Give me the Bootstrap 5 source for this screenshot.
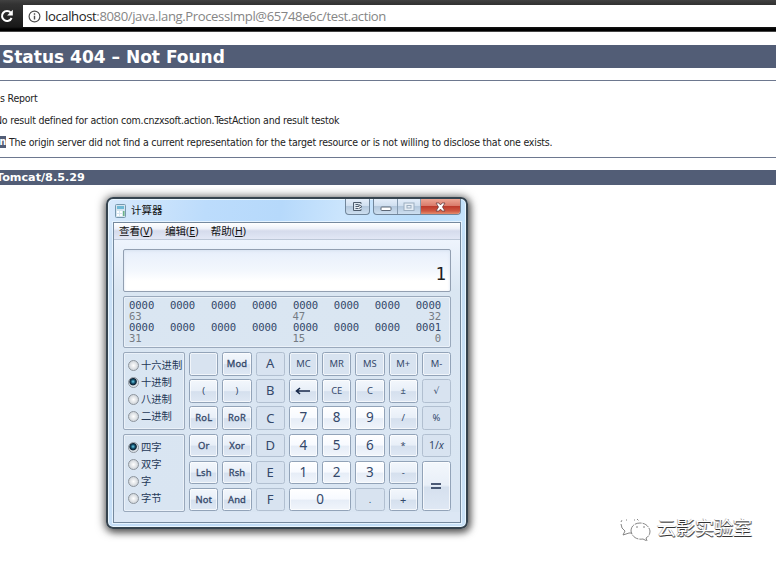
<!DOCTYPE html>
<html lang="zh-CN">
<head>
<meta charset="utf-8">
<title>Status 404 – Not Found</title>
<meta name="viewport" content="width=device-width, initial-scale=1">
<link href="https://cdn.jsdelivr.net/npm/bootstrap@5.3.0/dist/css/bootstrap.min.css" rel="stylesheet">
<style>
body{width:776px;height:561px;overflow:hidden;background:#fff;font-family:"DejaVu Sans Condensed","DejaVu Sans",sans-serif;color:#222}
.browser-bar{height:32px;background:linear-gradient(#414141 0,#333 4px,#262626 16px,#181818 27px,#000 29px,#000 31px,#888 32px)}
.reload{width:23px;height:32px}
.address{height:22px;margin-top:5px;background:#fff;font:13.1px "Open Sans","Noto Sans",sans-serif;color:#858585;white-space:nowrap}
.address b{font-weight:400;color:#222}
.address svg{margin:0 4px 0 5px}
.url{letter-spacing:-.39px}
.report{font-size:10.5px;line-height:14px;white-space:nowrap}
.report h1{height:23px;margin:13px 0 12px;padding-left:2px;background:#525d76;color:#fff;font:700 17px/24px "DejaVu Sans",sans-serif}
.rule{height:1px;background:#6d788f}
.report p{height:22px;margin:0;letter-spacing:-.21px}
.report p.kind{height:32px;padding-top:10px}
.report p.message{margin-left:-5px}
.cut-tag{float:left;width:6px;height:12px;line-height:11px;margin-right:3px;margin-top:1px;overflow:hidden;background:#525d76;color:#fff;font-weight:700;direction:rtl}
.report h3{height:15px;margin:12px 0 0 -5px;padding-left:1px;background:#525d76;color:#fff;font:700 11.2px/15px "DejaVu Sans",sans-serif}
.calc{left:106px;top:197px;width:362px;height:332px;border:2px solid #35434e;border-radius:7px;padding:0 5px 5px;background:linear-gradient(rgba(255,255,255,0) 24px,rgba(196,220,243,.6) 40px),linear-gradient(100deg,#d8e9fb 0,#bcdcfc 24%,#b6d9fb 42%,#cbe5fd 57%,#b9ddfb 75%,#d1e9fd 100%);box-shadow:inset 0 0 0 1px #e8f6ff,0 1px 8px 2px rgba(0,0,0,.5),2px 3px 7px rgba(0,0,0,.4);font-family:"Noto Sans","Noto Sans CJK SC",sans-serif;color:#253857}
.title{height:23px;font-size:10.5px;color:#111}
.title .icon{margin:0 5px 0 2px}
.caps{height:16px;border:1px solid #71869b;border-top:0;border-radius:0 0 4px 4px;overflow:hidden;background:linear-gradient(#e4eefa,#d0dfef 45%,#b4c8dd 50%,#cddff0)}
.caps span{width:23px}
.caps.lone{margin-right:3px}
.caps span+span{border-left:1px solid #8499ae}
.caps .shut{width:40px;background:linear-gradient(#eea694 0,#d97b6b 45%,#bd3b2c 50%,#cf5842 80%,#e58e6e)}
.client{height:301px;border:1px solid #75899e;background:#dce7f4;box-shadow:0 0 0 1px #e5f3ff}
.menu{height:17px;gap:12.5px;padding-left:5px;border-bottom:1px solid #bcc7d7;background:linear-gradient(#fff 0,#eef1f9 35%,#d5dbec 50%,#e2e7f5);font-size:10.5px;line-height:17px;color:#111}
.face{padding:9px 9px 0;background:linear-gradient(#eef4fd 0,#dae6f2 50px,#d9e5f2)}
.screen{height:43px;border:1px solid #929fb1;border-radius:2px;background:linear-gradient(#e7effb,#f3f7fd 50%,#fff 75%);box-shadow:inset 0 1px 3px #d7e2f0;color:#1f1f1f;font:17.5px/49px "DejaVu Sans Mono",monospace;padding-right:4px}
.bits{height:52px;margin:4px 0 4px;border:1px solid #9aa9bc;border-radius:2px;box-shadow:inset 0 0 0 1px #eaf1f9;padding:3px 9px 0 5px;font:10.6px/11px "DejaVu Sans Mono",monospace;letter-spacing:-.08px;color:#34486a}
.bits .marks{color:#757b82}
.marks .low{width:163.500px}
.radios{width:62px;border:1px solid #9aa9bc;border-radius:2px;box-shadow:inset 0 0 0 1px #eaf1f9;padding:4px 0 0 4px;font-size:10.3px}
.radios label{height:17px;white-space:nowrap}
.dot{flex:none;width:11px;height:11px;margin-right:2px;border:1px solid #8e959d;border-radius:50%;background:radial-gradient(#fff,#cfd4d9 75%)}
.dot.on{background:radial-gradient(circle at 45% 40%,#6fd0ec 0,#0d4560 30%,#123 45%,#dce3e9 58%)}
.keys{display:grid;grid-template-columns:repeat(8,29.2px);grid-template-rows:repeat(6,23.5px);column-gap:4.05px;row-gap:3.7px}
.key{display:flex;align-items:center;justify-content:center;border:1px solid #92a3b8;border-radius:2.5px;background:linear-gradient(#f3f7fc 0,#e8eff8 48%,#d5e0ee 53%,#dfe8f4);box-shadow:inset 0 0 0 1px rgba(255,255,255,.65);font-size:9.4px;line-height:1;color:#34486a}
.word{letter-spacing:.15px;-webkit-text-stroke:.3px #34486a}
.num{font-size:13.5px;background:linear-gradient(#fff 0,#f7faff 48%,#e6edf7 53%,#f1f5fb)}
.flat{background:#d8e3f0;border-color:#b1bfd0;box-shadow:none}
.mem{background:#d8e3f0}
.hex{font-size:13px}
.root{font:9px "DejaVu Sans",sans-serif}
.inverse{font-size:10.5px}
.plus{font-size:11px}
.wide{grid-column:4/6}
.tall{grid-column:8;grid-row:5/7}
.sign{left:618px;top:512px;width:140px;height:32px;font:19px/30px "Noto Sans CJK SC",sans-serif;color:#fff;text-shadow:0 1px 0 #333,1px 1px 0 #777,-1px 0 0 #ccc;white-space:nowrap}
</style>
<script src="https://cdn.jsdelivr.net/npm/bootstrap@5.3.0/dist/js/bootstrap.bundle.min.js"></script>
</head>
<body class="position-relative">
<header class="browser-bar d-flex">
  <svg class="reload flex-shrink-0" viewBox="0 0 23 32" fill="none"><path d="M10.8 12.7A5 5 0 1 0 11.6 18" stroke="#fff" stroke-width="2"/><path d="M12.8 9.8v5.7H7.1z" fill="#fff"/></svg>
  <div class="address flex-grow-1 d-flex align-items-center">
    <svg width="13" height="13" viewBox="0 0 13 13" fill="none" stroke="#4d4d4d"><circle cx="6.5" cy="6.5" r="5.4" stroke-width="1.2"/><path d="M6.5 5.8v3.8M6.5 3.3v1.4" stroke-width="1.4"/></svg>
    <span class="url"><b>localhost</b>:8080/java.lang.ProcessImpl@65748e6c/test.action</span>
  </div>
</header>
<main class="report">
  <h1>Status 404 – Not Found</h1>
  <div class="rule"></div>
  <p class="kind">s Report</p>
  <p class="message">No result defined for action com.cnzxsoft.action.TestAction and result testok</p>
  <p><span class="cut-tag">n</span>The origin server did not find a current representation for the target resource or is not willing to disclose that one exists.</p>
  <div class="rule"></div>
  <h3>Tomcat/8.5.29</h3>
</main>

<section class="calc position-absolute">
  <div class="title d-flex align-items-start">
    <div class="d-flex align-items-center flex-grow-1 h-100">
      <svg class="icon" width="11" height="14" viewBox="0 0 11 14"><rect x=".5" y=".5" width="10" height="13" rx="1" fill="#d5e5ef" stroke="#7798ae"/><path d="M2 2h7v3H2z" fill="#70b9d5"/><path d="M2 7h2v2H2zm3 0h2v2H5zM2 10h2v2H2zm3 0h2v2H5z" fill="#fff"/><path d="M8 7h1.5v5H8z" fill="#6cb286"/></svg>
      <span>计算器</span>
    </div>
    <div class="caps lone d-flex"><span class="d-flex align-items-center justify-content-center"><svg width="12" height="11" viewBox="0 0 12 11" fill="none" stroke="#4e5c6d"><path d="M9 3V1.500H1.500v8H9V8" fill="#dce6f0"/><path d="M3.500 3.500h3M3.500 7.500h3M3.500 5.500H7V3.800l3 1.800-3 1.800" fill="#fff"/></svg></span></div>
    <div class="caps d-flex">
      <span class="d-flex align-items-center justify-content-center"><svg width="12" height="12"><rect x="1" y="6" width="10" height="3.500" rx=".8" fill="#fff" stroke="#5d6877"/></svg></span>
      <span class="d-flex align-items-center justify-content-center"><svg width="12" height="10" fill="#e5edf5" stroke="#9caec0"><rect x="1" y="1" width="10" height="7.500"/><rect x="4" y="3.500" width="4" height="2.500"/></svg></span>
      <span class="shut d-flex align-items-center justify-content-center"><svg width="11" height="10" viewBox="0 0 11 10"><path d="M1 1h3l1.500 2L7 1h3L7.500 5 10 9H7L5.500 7 4 9H1l2.500-4z" fill="#fff" stroke="#6c3d40" stroke-width=".8"/></svg></span>
    </div>
  </div>
  <div class="client">
    <nav class="menu d-flex"><span>查看(<u>V</u>)</span><span>编辑(<u>E</u>)</span><span>帮助(<u>H</u>)</span></nav>
    <div class="face">
      <div class="screen text-end">1</div>
      <div class="bits">
        <div class="d-flex justify-content-between"><span>0000</span><span>0000</span><span>0000</span><span>0000</span><span>0000</span><span>0000</span><span>0000</span><span>0000</span></div>
        <div class="marks d-flex"><span class="low">63</span><span>47</span><span class="ms-auto">32</span></div>
        <div class="d-flex justify-content-between"><span>0000</span><span>0000</span><span>0000</span><span>0000</span><span>0000</span><span>0000</span><span>0000</span><span>0001</span></div>
        <div class="marks d-flex"><span class="low">31</span><span>15</span><span class="ms-auto">0</span></div>
      </div>
      <div class="d-flex justify-content-between">
        <div class="d-flex flex-column gap-1">
          <div class="radios" style="height:78px">
            <label class="d-flex align-items-center"><i class="dot"></i>十六进制</label>
            <label class="d-flex align-items-center"><i class="dot on"></i>十进制</label>
            <label class="d-flex align-items-center"><i class="dot"></i>八进制</label>
            <label class="d-flex align-items-center"><i class="dot"></i>二进制</label>
          </div>
          <div class="radios" style="height:78px">
            <label class="d-flex align-items-center"><i class="dot on"></i>四字</label>
            <label class="d-flex align-items-center"><i class="dot"></i>双字</label>
            <label class="d-flex align-items-center"><i class="dot"></i>字</label>
            <label class="d-flex align-items-center"><i class="dot"></i>字节</label>
          </div>
        </div>
        <div class="keys">
          <span class="key mem"></span><span class="key word">Mod</span><span class="key flat hex">A</span><span class="key mem">MC</span><span class="key mem">MR</span><span class="key mem">MS</span><span class="key mem">M+</span><span class="key mem">M-</span>
          <span class="key">(</span><span class="key">)</span><span class="key flat hex">B</span><span class="key"><svg width="16" height="8" viewBox="0 0 16 8"><path d="M1 4h14M5 1L1.500 4 5 7" fill="none" stroke="#17294a" stroke-width="1.600"/></svg></span><span class="key">CE</span><span class="key">C</span><span class="key">±</span><span class="key flat root">√</span>
          <span class="key word">RoL</span><span class="key word">RoR</span><span class="key flat hex">C</span><span class="key num">7</span><span class="key num">8</span><span class="key num">9</span><span class="key">/</span><span class="key flat">%</span>
          <span class="key word">Or</span><span class="key word">Xor</span><span class="key flat hex">D</span><span class="key num">4</span><span class="key num">5</span><span class="key num">6</span><span class="key">*</span><span class="key flat inverse">1/<i>x</i></span>
          <span class="key word">Lsh</span><span class="key word">Rsh</span><span class="key flat hex">E</span><span class="key num">1</span><span class="key num">2</span><span class="key num">3</span><span class="key">-</span><span class="key tall"><svg width="12" height="8"><path d="M1 2h10M1 6h10" stroke="#17294a" stroke-width="1.700"/></svg></span>
          <span class="key word">Not</span><span class="key word">And</span><span class="key flat hex">F</span><span class="key num wide">0</span><span class="key flat">.</span><span class="key plus">+</span>
        </div>
      </div>
    </div>
  </div>
</section>

<div class="sign position-absolute d-flex">
  <svg class="flex-shrink-0" width="39" height="32" viewBox="0 0 39 32" fill="none" stroke="#777" stroke-width=".9"><path d="M3 12l1 4 3 3-2 4 6-2h3"/><path d="M8 8h1M16 8h1M3 10l1-2M19 7l2 2" stroke-dasharray="2 1"/><path d="M13 19c0-5 4-8 9-8s9 3 10 8c0 4-2 6-4 7l1 3-4-2c-6 1-11-2-12-8z" stroke-dasharray="7 1"/><path d="M18 15h2M25 15h2"/></svg><span>云影实验室</span>
</div>
</body>
</html>
